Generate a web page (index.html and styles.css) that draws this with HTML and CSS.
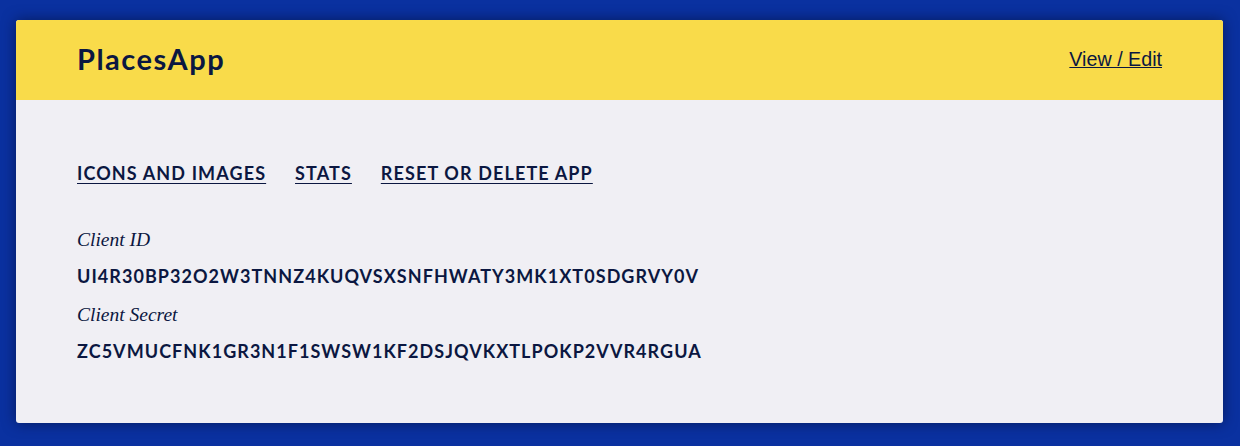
FILE: index.html
```html
<!DOCTYPE html>
<html>
<head>
<meta charset="utf-8">
<link rel="stylesheet" href="styles.css">
</head>
<body>
<div class="card">
  <header class="card-header">
    <h1 class="app-name">PlacesApp</h1>
    <a class="edit-link" href="#">View / Edit</a>
  </header>
  <div class="card-body">
    <nav class="tabs">
      <a href="#">ICONS AND IMAGES</a>
      <a href="#">STATS</a>
      <a href="#">RESET OR DELETE APP</a>
    </nav>
    <dl class="creds">
      <dt>Client ID</dt>
      <dd>UI4R30BP32O2W3TNNZ4KUQVSXSNFHWATY3MK1XT0SDGRVY0V</dd>
      <dt>Client Secret</dt>
      <dd>ZC5VMUCFNK1GR3N1F1SWSW1KF2DSJQVKXTLPOKP2VVR4RGUA</dd>
    </dl>
  </div>
</div>
</body>
</html>
```
FILE: styles.css
```css
html, body {
  margin: 0;
  height: 100%;
}
body {
  background: #0a31a0;
  padding: 20px 17px 0 16px;
  box-sizing: border-box;
  color: #0b1741;
}
.card {
  border-radius: 3px;
  overflow: hidden;
  box-shadow: 0 0 14px rgba(5, 20, 70, 0.75);
  height: 403px;
  background: #f0eff4;
}
.card-header {
  background: #f9db4a;
  height: 80px;
  display: flex;
  align-items: center;
  justify-content: space-between;
  padding: 0 61px 0 61px;
}
.app-name {
  margin: -3px 0 0;
  font-family: Lato, sans-serif;
  font-weight: 700;
  font-size: 29px;
  letter-spacing: 1.5px;
  color: #0b1741;
}
.edit-link {
  margin-top: -2px;
  font-family: "Liberation Sans", Arial, sans-serif;
  font-size: 19.7px;
  color: #0b1741;
  text-decoration: underline;
}
.card-body {
  padding: 61px 61px 0;
}
.tabs {
  display: flex;
  gap: 30px;
  font-family: Lato, sans-serif;
  font-weight: 700;
  font-size: 18px;
  line-height: 24px;
  letter-spacing: 1.12px;
}
.tabs a {
  color: #0b1741;
  text-decoration: underline;
  text-underline-offset: 3px;
  margin-right: -1.12px;
}
.creds {
  margin: 42px 0 0;
}
.creds dt {
  font-family: "Liberation Serif", serif;
  font-style: italic;
  font-size: 19.5px;
  margin: 0;
  line-height: 26px;
}
.creds dd {
  margin: 10px 0 13px;
  font-family: Lato, sans-serif;
  font-weight: 700;
  font-size: 18px;
  line-height: 26px;
  letter-spacing: 1.05px;
}
```
